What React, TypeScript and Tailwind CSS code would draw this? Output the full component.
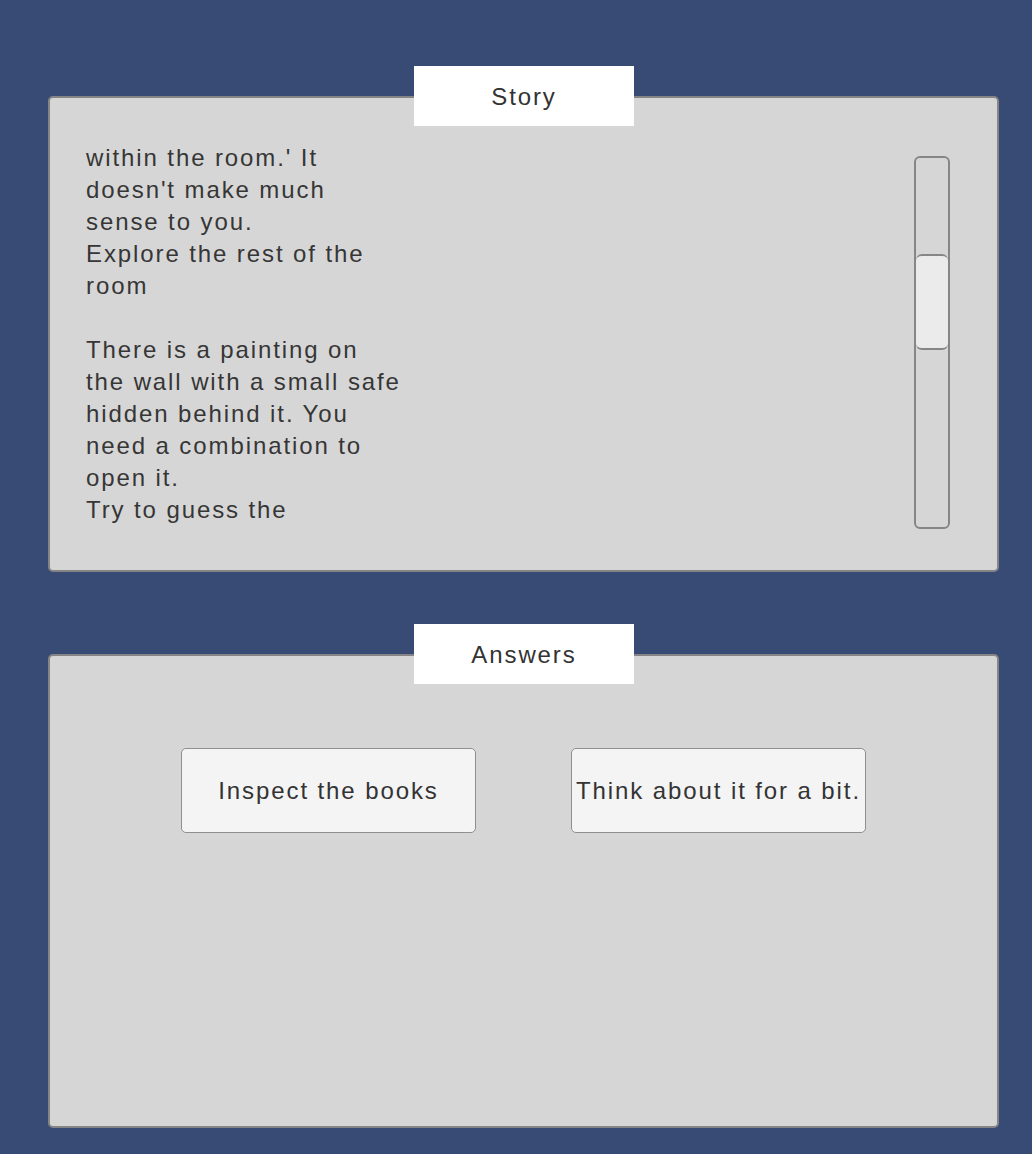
const storyLines = [
  "within the room.' It",
  "doesn't make much",
  "sense to you.",
  "Explore the rest of the",
  "room",
  "",
  "There is a painting on",
  "the wall with a small safe",
  "hidden behind it. You",
  "need a combination to",
  "open it.",
  "Try to guess the",
]

function Panel({
  title,
  className,
  children,
}: {
  title: string
  className?: string
  children: React.ReactNode
}) {
  return (
    <section
      className={`relative rounded-[5px] border-2 border-[#858585] bg-[#d6d6d6] ${className ?? ""}`}
    >
      <div className="absolute left-[364px] top-[-32px] flex h-[60px] w-[220px] items-center justify-center bg-white pt-[2px] text-[24px] tracking-[1.9px] text-[#333]">
        {title}
      </div>
      {children}
    </section>
  )
}

export default function App() {
  return (
    <div
      className="h-[1154px] w-[1032px] bg-[#384b74] pl-[48px] pr-[33px] pt-[96px]"
      style={{ fontFamily: '"Liberation Sans", Arial, sans-serif' }}
    >
      <Panel title="Story" className="h-[476px]">
        <div className="flex justify-between pl-[36px] pr-[47px] pt-[44px]">
          <div className="text-[24px] leading-[32px] tracking-[1.9px] text-[#363636]">
            {storyLines.map((line, i) => (
              <div key={i} className="h-[32px] whitespace-pre">
                {line}
              </div>
            ))}
          </div>
          <div className="mt-[14px] flex h-[373px] w-[36px] flex-col rounded-[6px] border-2 border-[#868686]">
            <div className="h-[96px]" />
            <div className="h-[96px] rounded-[6px] border-y-2 border-[#868686] bg-[#ebebeb]" />
          </div>
        </div>
      </Panel>

      <Panel title="Answers" className="mt-[82px] h-[474px]">
        <div className="flex justify-center gap-[95px] pt-[92px]">
          <button className="flex h-[85px] w-[295px] items-center justify-center rounded-[5px] border border-[#8f8f8f] bg-[#f4f4f4] text-[24px] tracking-[1.9px] text-[#333]">
            Inspect the books
          </button>
          <button className="flex h-[85px] w-[295px] items-center justify-center whitespace-nowrap rounded-[5px] border border-[#8f8f8f] bg-[#f4f4f4] text-[24px] tracking-[1.9px] text-[#333]">
            Think about it for a bit.
          </button>
        </div>
      </Panel>
    </div>
  )
}
